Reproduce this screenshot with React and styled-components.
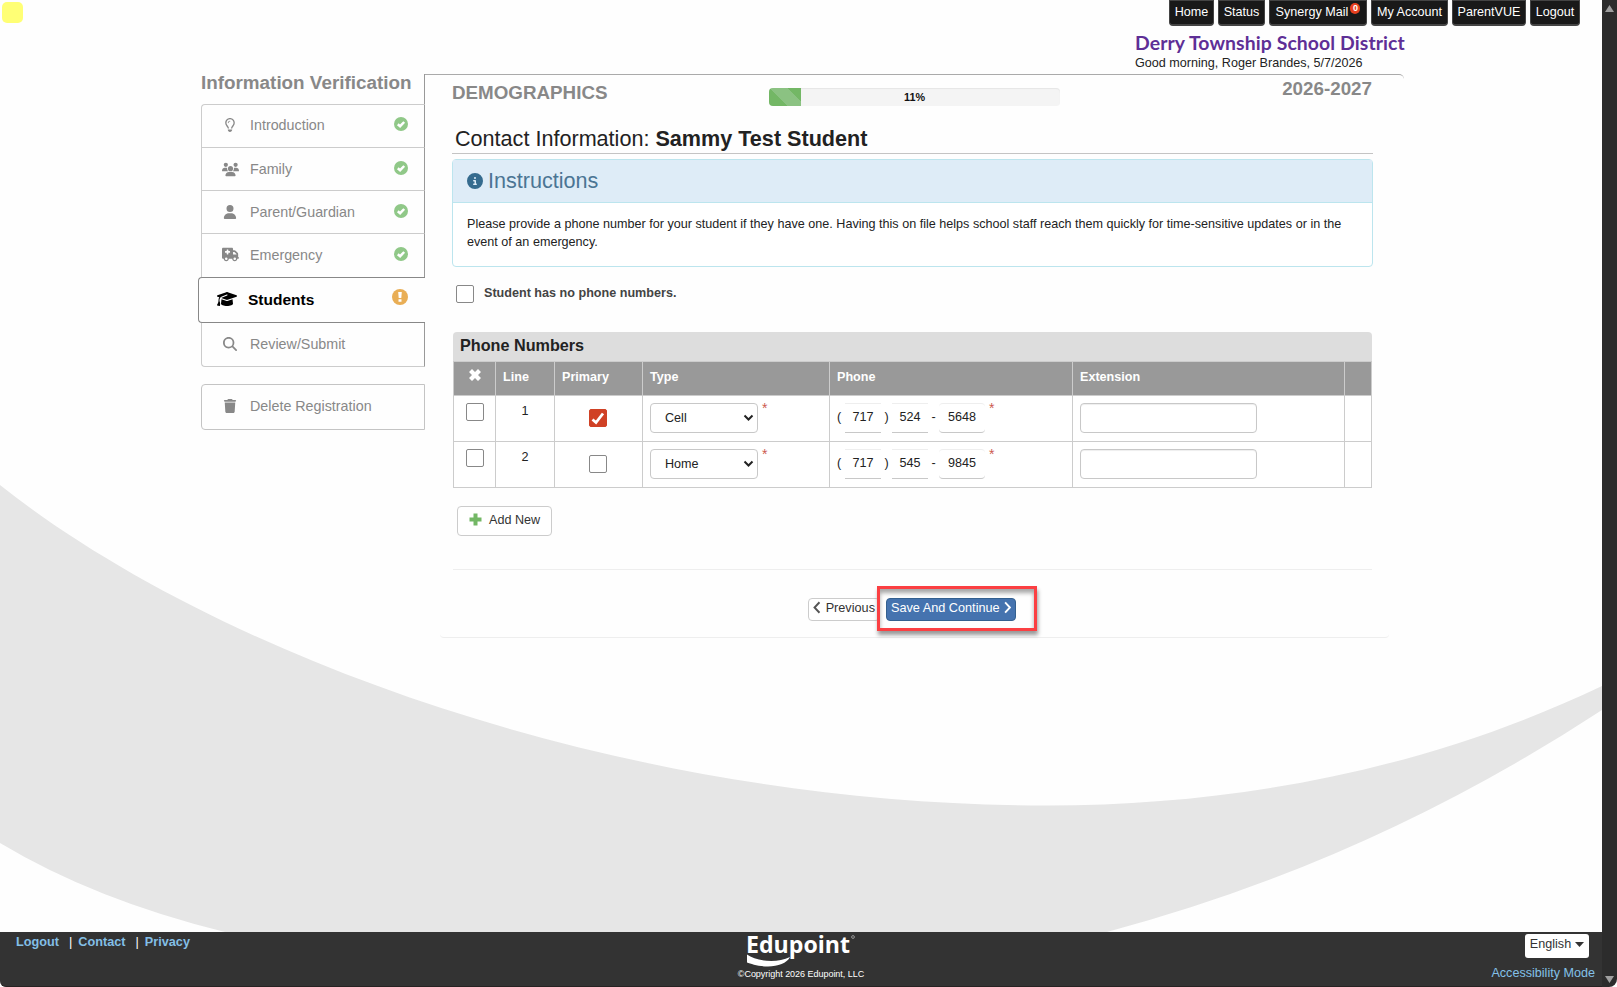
import styled, { createGlobalStyle, css } from "styled-components";
import {
  FaCircleInfo,
  FaGraduationCap,
  FaMagnifyingGlass,
  FaRegLightbulb,
  FaTrash,
  FaTruckMedical,
  FaUser,
  FaUsers,
} from "react-icons/fa6";

const GlobalStyle = createGlobalStyle`
  * {
    box-sizing: border-box;
  }
  body {
    margin: 0;
    background: #fefefe;
    color: #222;
    font-family: "Liberation Sans", Arial, sans-serif;
    font-size: 12.6px;
  }
`;

const Shell = styled.div`
  display: flex;
  width: 1617px;
  height: 987px;
  overflow: hidden;
`;

const Page = styled.div`
  position: relative;
  display: flex;
  flex-direction: column;
  flex: 1;
  z-index: 0;
`;

const Swoosh = styled.svg`
  position: absolute;
  top: 0;
  left: 0;
  z-index: -1;
`;

const Marker = styled.div`
  position: absolute;
  top: 2px;
  left: 2px;
  width: 21px;
  height: 21px;
  border-radius: 5px;
  background: #ffff75;
`;

const Scrollbar = styled.div`
  display: flex;
  flex-direction: column;
  justify-content: space-between;
  align-items: center;
  width: 15px;
  padding: 5px 0 4px;
  background: #2c2c2c;
  border-bottom-right-radius: 8px;
`;

const TopNav = styled.nav`
  display: flex;
  justify-content: flex-end;
  gap: 4px;
  height: 26px;
  padding-right: 22px;
`;

const NavItem = styled.a`
  display: flex;
  justify-content: center;
  width: ${({ $width }) => $width}px;
  padding-top: 4px;
  border: 1px solid #444;
  border-bottom-width: 2px;
  border-radius: 0 0 4px 4px;
  background: #191919;
  color: #fff;
  line-height: 14px;
  white-space: nowrap;
`;

const MailCount = styled.sup`
  width: 10px;
  height: 11px;
  margin: -2px 0 0 2px;
  border-radius: 5px;
  background: #e8401f;
  font-size: 9px;
  font-weight: bold;
  line-height: 11px;
  text-align: center;
`;

const District = styled.header`
  height: 48px;
  padding: 5px 0 0 1135px;
  white-space: nowrap;
  .name {
    color: #5e2f96;
    font-family: Lato, sans-serif;
    font-size: 19.4px;
    font-weight: bold;
    letter-spacing: 0.1px;
    line-height: 23px;
  }
  .greeting {
    padding-top: 1px;
    line-height: 17px;
  }
`;

const Columns = styled.div`
  display: flex;
  padding-left: 198px;
`;

const Sidebar = styled.aside`
  width: 227px;
`;

const SidebarTitle = styled.h2`
  height: 30px;
  margin: 0;
  padding-left: 3px;
  border-right: 1px solid #999;
  color: #888;
  font-size: 18.85px;
  line-height: 17px;
`;

const Step = styled.a`
  display: flex;
  align-items: center;
  height: ${({ $height }) => $height || 43}px;
  margin-left: 3px;
  padding-right: 16px;
  border: 1px solid #ccc;
  border-right-color: #999;
  border-bottom: 0;
  color: #888;
  font-size: 14.3px;
  line-height: 17px;
  .icon {
    display: flex;
    justify-content: center;
    width: 22px;
    margin: 0 9px 0 17px;
  }
  .label {
    flex: 1;
    padding-top: ${({ $first }) => ($first ? 0 : 1)}px;
    white-space: nowrap;
  }
  .state {
    color: #90c888;
    margin-bottom: 2px;
  }
  ${({ $height }) =>
    $height &&
    css`
      padding-bottom: 2px;
    `}
  ${({ $first }) =>
    $first &&
    css`
      padding-bottom: 2px;
      border-top-left-radius: 4px;
    `}
  ${({ $last }) =>
    $last &&
    css`
      border-top: 0;
      border-bottom: 1px solid #ccc;
      border-bottom-left-radius: 4px;
    `}
  ${({ $alone }) =>
    $alone &&
    css`
      margin-top: 17px;
      border: 1px solid #c4c4c4;
      border-radius: 4px 0 0 4px;
    `}
  ${({ $active }) =>
    $active &&
    css`
      margin-left: 0;
      padding-right: 17px;
      padding-bottom: 3px;
      border: 1px solid #888;
      border-right: 0;
      border-radius: 4px 0 0 4px;
      color: #000;
      font-size: 15.5px;
      font-weight: bold;
      .icon {
        margin: 0 10px 0 17px;
      }
      .state {
        color: #e9ae55;
        margin-bottom: 3px;
      }
    `}
`;

const Panel = styled.main`
  display: flex;
  flex-direction: column;
  width: 979px;
  height: 564px;
  padding: 0 31px 0 27px;
  border-top: 1px solid #aaa;
  border-top-right-radius: 5px;
`;

const PanelTop = styled.div`
  display: flex;
  height: 47px;
  color: #888;
  font-size: 18.8px;
  font-weight: bold;
  .section {
    width: 317px;
    padding-top: 7px;
    line-height: 22px;
  }
  .year {
    margin: 0 1px 0 auto;
    padding-top: 3px;
    line-height: 22px;
  }
`;

const Progress = styled.div`
  display: grid;
  width: 291px;
  height: 18px;
  margin-top: 13px;
  border-radius: 4px;
  background: #f4f4f4;
  box-shadow: inset 0 1px 1px #e6e6e6;
  overflow: hidden;
  > * {
    grid-area: 1 / 1;
  }
  span {
    color: #111;
    font-size: 10.8px;
    line-height: 19px;
    text-align: center;
  }
`;

const ProgressFill = styled.div`
  background: linear-gradient(
      45deg,
      #8bc282 25%,
      #73b765 25%,
      #73b765 50%,
      #8bc282 50%,
      #8bc282 75%,
      #73b765 75%
    )
    0 0 / 36px 36px;
  box-shadow: inset 0 -1px 0 #66a65a;
`;

const PageTitle = styled.h1`
  width: 921px;
  height: 32px;
  margin: 0;
  padding: 4px 0 0 3px;
  border-bottom: 1px solid #c4c4c4;
  font-size: 21.6px;
  font-weight: normal;
  line-height: 26px;
`;

const Instructions = styled.section`
  width: 921px;
  height: 109px;
  margin-top: 5px;
  border: 1px solid #bce5ee;
  border-radius: 4px;
  background: #fff;
  h3 {
    display: flex;
    align-items: center;
    gap: 5px;
    height: 43px;
    margin: 0;
    padding-left: 14px;
    border-bottom: 1px solid #bce5ee;
    background: #deecf7;
    color: #4b7594;
    font-size: 21.6px;
    font-weight: normal;
    svg {
      color: #356b8e;
      margin-top: 1px;
    }
  }
  p {
    margin: 0;
    padding: 12px 13px 0 14px;
    letter-spacing: 0.005px;
    line-height: 18px;
  }
`;

const CheckLine = styled.label`
  display: flex;
  gap: 10px;
  height: 65px;
  padding: 18px 0 0 4px;
  color: #444;
  font-weight: bold;
  line-height: 17px;
`;

const Box = styled.span`
  display: flex;
  align-items: center;
  justify-content: center;
  width: 18px;
  height: 18px;
  border: 1px solid ${({ $checked }) => ($checked ? "#d04125" : "#888")};
  border-radius: 2px;
  background: ${({ $checked }) => ($checked ? "#d04125" : "#fff")};
`;

const TableTitle = styled.div`
  width: 919px;
  height: 29px;
  margin-left: 1px;
  padding: 3px 0 0 7px;
  border-radius: 4px 4px 0 0;
  background: #ddd;
  font-size: 16.2px;
  font-weight: bold;
  line-height: 20px;
`;

const GridRow = styled.div`
  display: grid;
  grid-template-columns: 42px 59px 88px 187px 243px 272px 27px;
  width: 919px;
  height: ${({ $head }) => ($head ? 34 : 46)}px;
  margin-left: 1px;
  border: solid #ccc;
  border-width: 1px 0 0 1px;
  background: ${({ $head }) => ($head ? "#999" : "#fff")};
  &:last-child {
    height: 47px;
    border-bottom-width: 1px;
  }
`;

const HeadCell = styled.div`
  padding: 7px 0 0 ${({ $center }) => ($center ? 0 : 7)}px;
  border-right: 1px solid #ccc;
  color: #fff;
  font-weight: bold;
  line-height: 16px;
  text-align: ${({ $center }) => ($center ? "center" : "left")};
`;

const Cell = styled.div`
  display: flex;
  justify-content: ${({ $center }) => ($center ? "center" : "flex-start")};
  padding: ${({ $top }) => $top || 7}px ${({ $nudge }) => $nudge || 0}px 0
    ${({ $center, $left }) => ($center ? 0 : $left || 7)}px;
  border-right: 1px solid #ccc;
`;

const TypeSelect = styled.div`
  display: flex;
  align-items: center;
  justify-content: space-between;
  width: 108px;
  height: 30px;
  padding: 0 3px 1px 14px;
  border: 1px solid #c8c8c8;
  border-radius: 4px;
`;

const Required = styled.span`
  margin: -3px 0 0 4px;
  color: #cc5b4f;
  font-size: 14px;
  line-height: 16px;
`;

const PhonePart = styled.span`
  width: ${({ $width }) => $width || 36}px;
  height: 30px;
  border: solid #c8c8c8;
  border-width: 1px 0;
  border-top-color: #eee;
  border-radius: ${({ $width }) => ($width ? 4 : 0)}px;
  line-height: 27px;
  text-align: center;
`;

const PhoneMark = styled.span`
  width: ${({ $width }) => $width}px;
  line-height: 29px;
  text-align: ${({ $left }) => ($left ? "left" : "center")};
`;

const Extension = styled.div`
  width: 177px;
  height: 30px;
  border: 1px solid #c8c8c8;
  border-radius: 4px;
  box-shadow: inset 0 1px 1px #eee;
`;

const AddButton = styled.button`
  display: flex;
  align-items: center;
  gap: 7px;
  width: 95px;
  height: 30px;
  margin: 18px 0 33px 5px;
  padding: 0 0 3px 11px;
  border: 1px solid #ccc;
  border-radius: 4px;
  background: #fff;
  color: #333;
  font: inherit;
  white-space: nowrap;
`;

const Actions = styled.div`
  display: flex;
  height: 68px;
  width: 949px;
  margin-left: -12px;
  padding: 16px 0 0 368px;
  border-bottom: 1px solid #eee;
  border-radius: 4px;
`;

const Rule = styled.div`
  height: 1px;
  width: 919px;
  margin: 0 0 0 1px;
  background: #eee;
`;

const StepButton = styled.button`
  display: flex;
  align-items: center;
  height: 23px;
  gap: 4px;
  margin-top: 12px;
  padding: 0 4px 4px;
  border: 1px solid ${({ $primary }) => ($primary ? "#34608f" : "#ccc")};
  border-radius: 4px;
  background: ${({ $primary }) => ($primary ? "#4573af" : "#fff")};
  color: ${({ $primary }) => ($primary ? "#fff" : "#333")};
  font: inherit;
  font-size: 12.7px;
  white-space: nowrap;
`;

const PreviousButton = styled(StepButton)`
  width: 72px;
  gap: 5px;
  margin-right: -3px;
  svg {
    color: #555;
  }
`;

const Highlight = styled.div`
  width: 160px;
  height: 45px;
  padding-left: 6px;
  border: 3px solid #fb3f42;
  box-shadow: 1px 4px 4px rgba(0, 0, 0, 0.4), inset 0 4px 4px rgba(0, 0, 0, 0.35);
  z-index: 1;
  ${StepButton} {
    width: 130px;
    margin-top: 9px;
  }
`;

const Footer = styled.footer`
  display: grid;
  grid-template-columns: 1fr 200px 1fr;
  height: 55px;
  margin-top: auto;
  border-bottom: 1px solid #272222;
  border-bottom-left-radius: 6px;
  background: #333;
  color: #fff;
  .links {
    display: flex;
    gap: 10px;
    padding: 1px 0 0 16px;
    font-size: 12.7px;
    line-height: 18px;
  }
  .links a {
    color: #83bfe6;
    font-weight: bold;
  }
  .links a + a {
    display: flex;
    gap: 6px;
  }
  .links a + a::before {
    content: "|";
    color: #fff;
    font-weight: normal;
  }
`;

const Brand = styled.div`
  display: flex;
  flex-direction: column;
  align-items: center;
  svg {
    overflow: visible;
  }
  .copyright {
    font-size: 9px;
    letter-spacing: -0.03px;
    line-height: 13px;
    white-space: nowrap;
  }
`;

const FooterTools = styled.div`
  display: flex;
  flex-direction: column;
  align-items: flex-end;
  padding: 2px 7px 0 0;
  color: #83c1e8;
  line-height: 17px;
`;

const Language = styled.div`
  display: flex;
  align-items: center;
  justify-content: center;
  gap: 4px;
  width: 64px;
  height: 24px;
  margin: 0 6px 7px 0;
  padding-bottom: 3px;
  border-radius: 3px;
  background: #fff;
  color: #333;
`;

const topLinks = [
  { label: "Home", width: 45 },
  { label: "Status", width: 47 },
  { label: "Synergy Mail", width: 98, count: 0 },
  { label: "My Account", width: 77 },
  { label: "ParentVUE", width: 74 },
  { label: "Logout", width: 50 },
];

const doneSteps = [
  { label: "Introduction", icon: <FaRegLightbulb size={14} /> },
  { label: "Family", icon: <FaUsers size={17} /> },
  { label: "Parent/Guardian", icon: <FaUser size={14} /> },
  { label: "Emergency", icon: <FaTruckMedical size={17} />, height: 44 },
];

const phones = [
  { type: "Cell", area: "717", prefix: "524", number: "5648", primary: true },
  { type: "Home", area: "717", prefix: "545", number: "9845" },
];

function DoneIcon() {
  return (
    <svg className="state" width="14" height="14" viewBox="0 0 14 14" fill="none">
      <circle cx="7" cy="7" r="7" fill="currentColor" />
      <path d="M3.8 7.2 6.1 9.2 10.2 5" stroke="#fff" strokeWidth="2.5" />
    </svg>
  );
}

function WarningIcon() {
  return (
    <svg className="state" width="16" height="16" viewBox="0 0 16 16">
      <circle cx="8" cy="8" r="8" fill="currentColor" />
      <path d="M6.2 3H9.8L9.3 9H6.7ZM6.5 10.3H9.5V12.8H6.5Z" fill="#fff" />
    </svg>
  );
}

function Chevron({ flip }) {
  return (
    <svg width="8" height="13" viewBox="0 0 8 13" fill="none">
      <path
        d={flip ? "M1.2 1 6.4 6.5 1.2 12" : "M6.8 1 1.6 6.5 6.8 12"}
        stroke="currentColor"
        strokeWidth="2"
      />
    </svg>
  );
}

function Logo() {
  return (
    <svg width="110" height="36" viewBox="0 0 110 36" fill="#fff">
      <text
        x="0"
        y="21"
        fontFamily="Open Sans, sans-serif"
        fontWeight="bold"
        fontSize="24"
        textLength="104"
        lengthAdjust="spacingAndGlyphs"
      >
        Edupoint
      </text>
      <path d="M1 22.5C10 29 30 32 44 25C41 31 32 34.5 22 34.5C13 34.5 5 32 1 30.5Z" />
      <circle cx="107" cy="5" r="1.4" fill="none" stroke="#aaa" strokeWidth="0.8" />
    </svg>
  );
}

function PhoneRow({ line, phone }) {
  return (
    <GridRow>
      <Cell $center>
        <Box />
      </Cell>
      <Cell $center $top={8}>
        {line}
      </Cell>
      <Cell $center $top={13} $nudge={2}>
        <Box $checked={phone.primary}>
          {phone.primary && (
            <svg width="14" height="13" viewBox="0 0 14 13" fill="none">
              <path d="M1.5 7.5 5 10.5 12 1.5" stroke="#fff" strokeWidth="2.8" />
            </svg>
          )}
        </Box>
      </Cell>
      <Cell>
        <TypeSelect>
          {phone.type}
          <svg width="11" height="8" viewBox="0 0 11 8" fill="none">
            <path d="M1.5 1.5 5.5 5.5 9.5 1.5" stroke="#222" strokeWidth="2" />
          </svg>
        </TypeSelect>
        <Required>*</Required>
      </Cell>
      <Cell>
        <PhoneMark $width={8} $left>
          (
        </PhoneMark>
        <PhonePart>{phone.area}</PhonePart>
        <PhoneMark $width={11}>)</PhoneMark>
        <PhonePart>{phone.prefix}</PhonePart>
        <PhoneMark $width={11}>-</PhoneMark>
        <PhonePart $width={46}>{phone.number}</PhonePart>
        <Required>*</Required>
      </Cell>
      <Cell>
        <Extension />
      </Cell>
      <Cell />
    </GridRow>
  );
}

export default function App() {
  return (
    <Shell>
      <GlobalStyle />
      <Page>
        <Swoosh width="1602" height="932" viewBox="0 0 1602 932">
          <path
            fill="#e6e6e6"
            d="M0 485C210 652 617 805.5 1047 805.5C1240 805.5 1430 768 1602 686V710Q1370 862 1107 932H225Q95 900 0 843Z"
          />
        </Swoosh>
        <Marker />
        <TopNav>
          {topLinks.map(({ label, width, count }) => (
            <NavItem key={label} $width={width}>
              {label}
              {count !== undefined && <MailCount>{count}</MailCount>}
            </NavItem>
          ))}
        </TopNav>
        <District>
          <div className="name">Derry Township School District</div>
          <div className="greeting">Good morning, Roger Brandes, 5/7/2026</div>
        </District>
        <Columns>
          <Sidebar>
            <SidebarTitle>Information Verification</SidebarTitle>
            {doneSteps.map(({ label, icon, height }, i) => (
              <Step key={label} $height={height} $first={i === 0}>
                <span className="icon">{icon}</span>
                <span className="label">{label}</span>
                <DoneIcon />
              </Step>
            ))}
            <Step $active $height={46}>
              <span className="icon">
                <FaGraduationCap size={20} />
              </span>
              <span className="label">Students</span>
              <WarningIcon />
            </Step>
            <Step $last $height={44}>
              <span className="icon">
                <FaMagnifyingGlass size={14} />
              </span>
              <span className="label">Review/Submit</span>
            </Step>
            <Step $alone $height={46}>
              <span className="icon">
                <FaTrash size={14} />
              </span>
              <span className="label">Delete Registration</span>
            </Step>
          </Sidebar>
          <Panel>
            <PanelTop>
              <div className="section">DEMOGRAPHICS</div>
              <Progress>
                <ProgressFill style={{ width: "11%" }} />
                <span>11%</span>
              </Progress>
              <div className="year">2026-2027</div>
            </PanelTop>
            <PageTitle>
              Contact Information: <b>Sammy Test Student</b>
            </PageTitle>
            <Instructions>
              <h3>
                <FaCircleInfo size={16} />
                Instructions
              </h3>
              <p>
                Please provide a phone number for your student if they have one. Having
                this on file helps school staff reach them quickly for time-sensitive
                updates or in the event of an emergency.
              </p>
            </Instructions>
            <CheckLine>
              <Box />
              Student has no phone numbers.
            </CheckLine>
            <TableTitle>Phone Numbers</TableTitle>
            <div>
              <GridRow $head>
                <HeadCell $center>
                  <svg width="12" height="12" viewBox="0 0 12 12" fill="#fff">
                    <path d="M3 0 6 3 9 0 12 3 9 6 12 9 9 12 6 9 3 12 0 9 3 6 0 3Z" />
                  </svg>
                </HeadCell>
                <HeadCell>Line</HeadCell>
                <HeadCell>Primary</HeadCell>
                <HeadCell>Type</HeadCell>
                <HeadCell>Phone</HeadCell>
                <HeadCell>Extension</HeadCell>
                <HeadCell />
              </GridRow>
              {phones.map((phone, i) => (
                <PhoneRow key={phone.type} line={i + 1} phone={phone} />
              ))}
            </div>
            <AddButton>
              <svg width="13" height="13" viewBox="0 0 13 13" fill="#73b765">
                <path d="M4.5 0.5H8.5V4.5H12.5V8.5H8.5V12.5H4.5V8.5H0.5V4.5H4.5Z" />
              </svg>
              Add New
            </AddButton>
            <Rule />
            <Actions>
              <PreviousButton>
                <Chevron />
                Previous
              </PreviousButton>
              <Highlight>
                <StepButton $primary>
                  Save And Continue
                  <Chevron flip />
                </StepButton>
              </Highlight>
            </Actions>
          </Panel>
        </Columns>
        <Footer>
          <div className="links">
            <a>Logout</a>
            <a>Contact</a>
            <a>Privacy</a>
          </div>
          <Brand>
            <Logo />
            <div className="copyright">©Copyright 2026 Edupoint, LLC</div>
          </Brand>
          <FooterTools>
            <Language>
              English
              <svg width="9" height="5" viewBox="0 0 9 5" fill="#333">
                <path d="M0 0H9L4.5 5Z" />
              </svg>
            </Language>
            Accessibility Mode
          </FooterTools>
        </Footer>
      </Page>
      <Scrollbar>
        <svg width="9" height="7" viewBox="0 0 9 7" fill="#9f9f9f">
          <path d="M4.5 0 9 7H0Z" />
        </svg>
        <svg width="9" height="7" viewBox="0 0 9 7" fill="#9f9f9f">
          <path d="M0 0H9L4.5 7Z" />
        </svg>
      </Scrollbar>
    </Shell>
  );
}
